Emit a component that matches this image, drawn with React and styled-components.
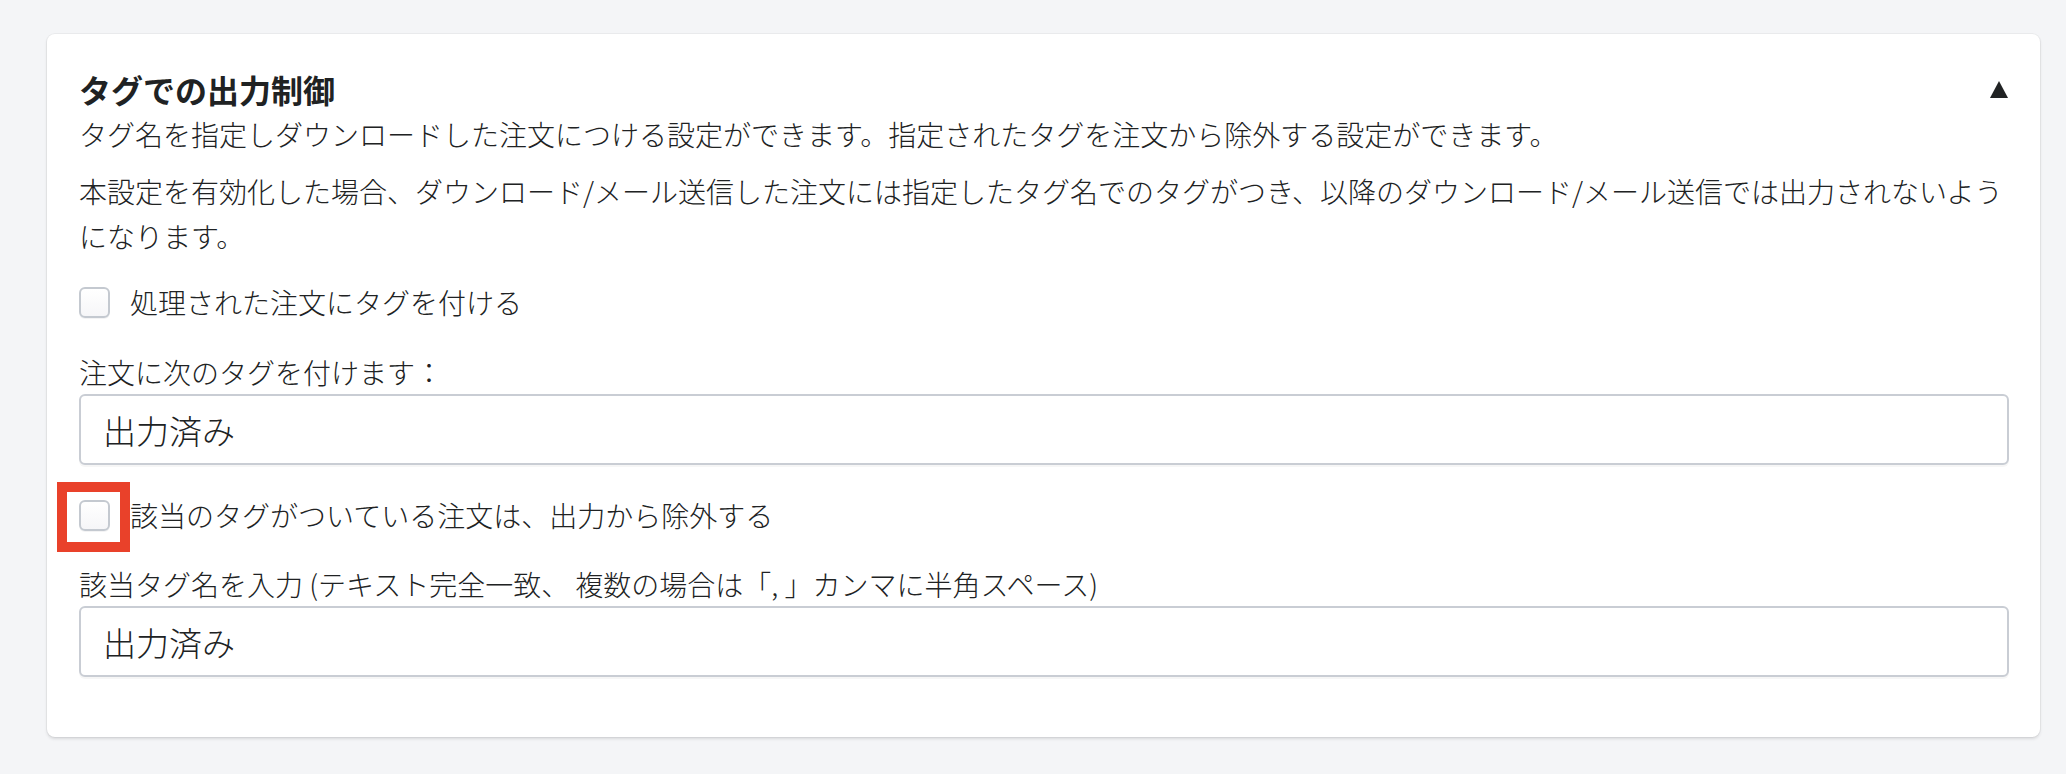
import React from "react";
import styled, { createGlobalStyle } from "styled-components";

const GlobalStyle = createGlobalStyle`
  html, body {
    margin: 0;
    padding: 0;
    background: #f4f5f7;
  }
  body {
    font-family: "Noto Sans CJK JP", "Noto Sans", sans-serif;
    font-weight: 300;
    color: #202223;
  }
`;

const Page = styled.div`
  padding: 34px 26px 37px 47px;
`;

const Card = styled.section`
  background: #fff;
  border-radius: 8px;
  box-shadow: 0 0 0 1px rgba(63, 63, 68, 0.05), 0 2px 3px rgba(63, 63, 68, 0.15);
  padding: 32px 31px 60px 32px;
`;

const Header = styled.div`
  display: flex;
  align-items: center;
  justify-content: space-between;
`;

const Title = styled.h2`
  margin: 0;
  font-size: 32px;
  font-weight: 700;
  line-height: 46px;
`;

const Toggle = styled.span`
  width: 0;
  height: 0;
  margin-right: 1px;
  border-left: 9px solid transparent;
  border-right: 9px solid transparent;
  border-bottom: 17px solid #202223;
`;

const Text = styled.p`
  margin: ${(p) => p.$mt || 0}px 0 0;
  font-size: 28px;
  line-height: 45px;
`;

const CheckRow = styled.label`
  display: flex;
  align-items: center;
  gap: 20px;
  margin-top: ${(p) => p.$mt}px;
  font-size: 28px;
  line-height: 45px;
  cursor: pointer;
`;

const BoxWrap = styled.span`
  position: relative;
  display: inline-flex;
`;

const Box = styled.input.attrs({ type: "checkbox" })`
  appearance: none;
  margin: 0;
  width: 31px;
  height: 31px;
  border: 2px solid #c4c9d0;
  border-radius: 6px;
  background: linear-gradient(180deg, #ffffff 0%, #f6f6f8 100%);
  box-shadow: 0 1px 0 rgba(22, 29, 37, 0.05);
  box-sizing: border-box;
  cursor: pointer;
`;

const Highlight = styled.span`
  position: absolute;
  left: -22px;
  top: -18px;
  width: 73px;
  height: 70px;
  box-sizing: border-box;
  border: 10px solid #e9412a;
  pointer-events: none;
`;

const FieldLabel = styled.div`
  margin-top: ${(p) => p.$mt}px;
  font-size: 28px;
  line-height: 44px;
`;

const Input = styled.input`
  display: block;
  width: 100%;
  height: 71px;
  box-sizing: border-box;
  margin: 0;
  padding: 0 22px;
  border: 2px solid #c9cdd4;
  border-radius: 6px;
  box-shadow: 0 2px 0 rgba(22, 29, 37, 0.04);
  background: #fff;
  font-family: "Noto Sans CJK JP", "Noto Sans", sans-serif;
  font-weight: 300;
  font-size: 33px;
  color: #202223;
  outline: none;
`;

export default function App() {
  return (
    <>
      <GlobalStyle />
      <Page>
        <Card>
          <Header>
            <Title>タグでの出力制御</Title>
            <Toggle />
          </Header>
          <Text>
            タグ名を指定しダウンロードした注文につける設定ができます。指定されたタグを注文から除外する設定ができます。
          </Text>
          <Text $mt={12}>
            本設定を有効化した場合、ダウンロード/メール送信した注文には指定したタグ名でのタグがつき、以降のダウンロード/メール送信では出力されないようになります。
          </Text>

          <CheckRow $mt={21}>
            <BoxWrap>
              <Box />
            </BoxWrap>
            処理された注文にタグを付ける
          </CheckRow>

          <FieldLabel $mt={25}>注文に次のタグを付けます：</FieldLabel>
          <Input defaultValue="出力済み" />

          <CheckRow $mt={28}>
            <BoxWrap>
              <Box />
              <Highlight />
            </BoxWrap>
            該当のタグがついている注文は、出力から除外する
          </CheckRow>

          <FieldLabel $mt={24}>
            該当タグ名を入力 (テキスト完全一致、 複数の場合は「, 」カンマに半角スペース)
          </FieldLabel>
          <Input defaultValue="出力済み" />
        </Card>
      </Page>
    </>
  );
}
